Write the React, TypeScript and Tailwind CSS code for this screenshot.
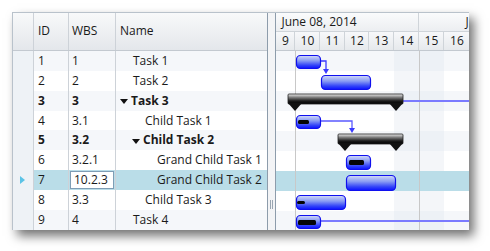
import React from "react";

type Row = { id: string; wbs: string; name: string; indent: number; bold?: boolean; expander?: boolean };

const rows: Row[] = [
  { id: "1", wbs: "1", name: "Task 1", indent: 17 },
  { id: "2", wbs: "2", name: "Task 2", indent: 17 },
  { id: "3", wbs: "3", name: "Task 3", indent: 4, bold: true, expander: true },
  { id: "4", wbs: "3.1", name: "Child Task 1", indent: 29 },
  { id: "5", wbs: "3.2", name: "Child Task 2", indent: 16, bold: true, expander: true },
  { id: "6", wbs: "3.2.1", name: "Grand Child Task 1", indent: 41 },
  { id: "7", wbs: "10.2.3", name: "Grand Child Task 2", indent: 41 },
  { id: "8", wbs: "3.3", name: "Child Task 3", indent: 29 },
  { id: "9", wbs: "4", name: "Task 4", indent: 17 },
];

const SELECTED = 6;
const days = [
  { d: "9", w: 19 },
  { d: "10", w: 25 },
  { d: "11", w: 25 },
  { d: "12", w: 24 },
  { d: "13", w: 25 },
  { d: "14", w: 25 },
  { d: "15", w: 25 },
  { d: "16", w: 25 },
];

function rowBg(i: number) {
  if (i === SELECTED) return "bg-[#badde8]";
  return i % 2 === 0 ? "bg-[#f5f7fa]" : "bg-white";
}

function Bar({ x, y, w, h, p }: { x: number; y: number; w: number; h: number; p?: [number, number, number, number] }) {
  return (
    <g>
      <rect x={x + 0.5} y={y + 0.5} width={w - 1} height={h - 1} rx={4} fill="url(#blueGrad)" stroke="#1010ee" strokeWidth={1.2} />
      {p && <rect x={p[0]} y={p[1]} width={p[2]} height={p[3]} rx={1.5} fill="#050505" />}
    </g>
  );
}

function Summary({ x1, x2, y }: { x1: number; x2: number; y: number }) {
  return (
    <g>
      <rect x={x1} y={y} width={x2 - x1} height={10} rx={1} fill="url(#blackGrad)" stroke="#222" strokeWidth={0.8} />
      <polygon points={`${x1},${y + 9} ${x1 + 14},${y + 9} ${x1 + 7},${y + 17}`} fill="#111" />
      <polygon points={`${x2 - 14},${y + 9} ${x2},${y + 9} ${x2 - 7},${y + 17}`} fill="#111" />
    </g>
  );
}

export default function App() {
  const font = { fontFamily: '"Open Sans", "Noto Sans", sans-serif' };
  return (
    <div className="w-[490px] h-[251px] bg-white pl-[12px] pt-[12px]" style={font}>
      <div className="flex w-[457px] h-[218px] bg-white shadow-[5px_6px_10px_rgba(0,0,0,0.55)] text-[12px] text-[#1a1a1a] border-l border-t border-[#b9c2cb]">
        {/* Grid */}
        <div className="flex flex-col w-[255px]">
          <div className="flex h-[38px] bg-gradient-to-b from-[#f8f9fa] to-[#e4e7eb] border-b border-[#c3c9d0]">
            <div className="w-[21px] border-r border-[#cdd2d8]" />
            <div className="w-[35px] border-r border-[#cdd2d8] flex items-center pl-[4px]">ID</div>
            <div className="w-[47px] border-r border-[#cdd2d8] flex items-center pl-[3px]">WBS</div>
            <div className="flex-1 flex items-center pl-[4px]">Name</div>
          </div>
          {rows.map((r, i) => (
            <div key={r.id} className={`flex h-[20px] ${r.bold ? "font-bold" : ""}`}>
              <div className="w-[21px] bg-[#eef2f6] border-r border-[#cdd2d8] flex items-center pl-[7px]">
                {i === SELECTED && (
                  <div className="w-0 h-0 border-y-[4px] border-y-transparent border-l-[5px] border-l-[#5bc3e6]" />
                )}
              </div>
              <div className={`w-[35px] border-r border-[#cdd2d8] flex items-center pl-[4px] ${rowBg(i)}`}>{r.id}</div>
              <div className={`w-[47px] border-r border-[#cdd2d8] flex items-center ${i === SELECTED ? "pl-[1px]" : "pl-[3px]"} ${rowBg(i)}`}>
                {i === SELECTED ? (
                  <div className="w-[44px] h-[18px] bg-white border border-[#7e9db5] flex items-center pl-[3px]">{r.wbs}</div>
                ) : (
                  r.wbs
                )}
              </div>
              <div className={`flex-1 flex items-center ${rowBg(i)}`} style={{ paddingLeft: r.indent }}>
                {r.expander && (
                  <div className="w-0 h-0 mr-[3px] mt-[2px] border-x-[4px] border-x-transparent border-t-[5px] border-t-[#111]" />
                )}
                <span className="whitespace-nowrap">{r.name}</span>
              </div>
            </div>
          ))}
        </div>
        {/* Splitter */}
        <div className="relative w-[9px] border-x border-[#8d9cab] bg-[#f3f4f6]">
          <div className="absolute left-[2px] top-[187px] w-[3px] h-[9px] border-x border-[#9aa6b2]" />
        </div>
        {/* Gantt */}
        <div className="flex flex-col w-[193px] overflow-hidden">
          <div className="h-[19px] flex bg-gradient-to-b from-[#fafbfc] to-[#eceef1] border-b border-[#cfd4d9]">
            <div className="w-[143px] shrink-0 pl-[5px] flex items-center border-r border-[#cfd4d9] whitespace-nowrap">June 08, 2014</div>
            <div className="flex-1 flex items-center pl-[46px] whitespace-nowrap">J</div>
          </div>
          <div className="h-[19px] flex bg-gradient-to-b from-[#f7f8fa] to-[#e6e9ec] border-b border-[#c3c9d0]">
            {days.map((d, i) => (
              <div
                key={d.d}
                className={`shrink-0 flex items-center justify-center ${i < days.length - 1 ? "border-r border-[#cfd4d9]" : ""}`}
                style={{ width: d.w }}
              >
                {d.d}
              </div>
            ))}
          </div>
          <div className="relative flex-1">
            {rows.map((r, i) => (
              <div key={r.id} className={`h-[20px] ${rowBg(i)}`} />
            ))}
            <svg className="absolute left-0 top-0" width={193} height={180}>
              <defs>
                <linearGradient id="blueGrad" x1="0" y1="0" x2="0" y2="1">
                  <stop offset="0" stopColor="#d3dbf8" />
                  <stop offset="0.4" stopColor="#8a9cf3" />
                  <stop offset="0.75" stopColor="#3344f8" />
                  <stop offset="1" stopColor="#0a10ff" />
                </linearGradient>
                <linearGradient id="blackGrad" x1="0" y1="0" x2="0" y2="1">
                  <stop offset="0" stopColor="#eeeeee" />
                  <stop offset="0.35" stopColor="#7a7a7a" />
                  <stop offset="0.7" stopColor="#1a1a1a" />
                  <stop offset="1" stopColor="#000" />
                </linearGradient>
              </defs>
              <rect x={118} y={0} width={50} height={120} fill="#dfe5ee" opacity={0.35} />
              <rect x={118} y={140} width={50} height={40} fill="#dfe5ee" opacity={0.35} />
              <line x1={19.5} y1={0} x2={19.5} y2={180} stroke="#c8c8c8" strokeWidth={1} />
              <line x1={143.5} y1={0} x2={143.5} y2={180} stroke="#c8c8c8" strokeWidth={1} />
              <line x1={120} y1={50} x2={193} y2={50} stroke="#7a7aff" strokeWidth={2} />
              <line x1={45} y1={170} x2={193} y2={170} stroke="#7a7aff" strokeWidth={2} />
              <polyline points="45,10 50,10 50,19" fill="none" stroke="#3a3aff" strokeWidth={1.3} />
              <polygon points="47,18 53,18 50,23" fill="#3a3aff" />
              <polyline points="45,70 76,70 76,78" fill="none" stroke="#5a5aff" strokeWidth={1.3} />
              <polygon points="73,77 79,77 76,82" fill="#3a3aff" />
              <Bar x={20} y={4} w={25} h={14} />
              <Bar x={45} y={24} w={50} h={15} />
              <Summary x1={12} x2={127} y={43} />
              <Bar x={20} y={64} w={25} h={14} p={[22, 69, 11, 4]} />
              <Summary x1={62} x2={127} y={83} />
              <Bar x={70} y={104} w={25} h={15} p={[73, 109, 15, 5]} />
              <Bar x={70} y={124} w={50} h={16} />
              <Bar x={20} y={144} w={50} h={15} p={[21, 150, 8, 3]} />
              <Bar x={20} y={164} w={25} h={14} p={[22, 169, 18, 5]} />
            </svg>
          </div>
        </div>
      </div>
    </div>
  );
}
